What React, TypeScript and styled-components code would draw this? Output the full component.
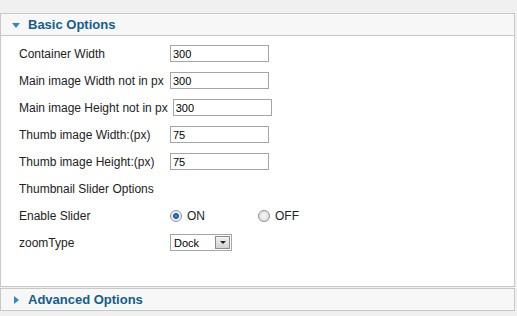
import * as React from 'react';
import styled, { createGlobalStyle } from 'styled-components';

const GlobalStyle = createGlobalStyle`
  html, body {
    margin: 0;
    padding: 0;
    background: #f0f0f0;
  }
  body {
    font-family: "Liberation Sans", Arial, sans-serif;
    font-size: 12px;
    color: #222;
  }
`;

const Page = styled.div`
  width: 515px;
  padding-top: 13px;
  display: flex;
  flex-direction: column;
  gap: 1px;
`;

const Panel = styled.section`
  border: 1px solid #c8c8c8;
  background: #fff;
`;

const PanelHeader = styled.h3<{ $open?: boolean }>`
  margin: 0;
  height: 21px;
  display: flex;
  align-items: center;
  gap: 8px;
  padding-left: 11px;
  background: #f7f7f7;
  border-bottom: ${p => (p.$open ? '1px solid #c8c8c8' : 'none')};
  font-size: 13px;
  font-weight: bold;
  color: #135d8e;
`;

const Arrow = styled.span<{ $open?: boolean }>`
  width: 0;
  height: 0;
  ${p =>
    p.$open
      ? `border-left: 4px solid transparent;
         border-right: 4px solid transparent;
         border-top: 5px solid #2a8ccc;
         margin-top: 1px;`
      : `border-top: 4px solid transparent;
         border-bottom: 4px solid transparent;
         border-left: 5px solid #2a8ccc;
         margin-left: 2px;
         margin-right: 1px;`}
`;

const Body = styled.div`
  height: 250px;
  padding: 4px 0 0 18px;
  box-sizing: border-box;
`;

const Row = styled.div`
  display: flex;
  align-items: center;
  height: 27px;
`;

const Label = styled.label`
  min-width: 146px;
  margin-right: 5px;
  white-space: nowrap;
`;

const TextInput = styled.input`
  width: 99px;
  height: 17px;
  box-sizing: border-box;
  border: 1px solid #a5a5a5;
  padding: 1px 2px;
  font-family: "Liberation Sans", Arial, sans-serif;
  font-size: 11px;
  color: #000;
  outline: none;
`;

const RadioGroup = styled.div`
  display: flex;
  align-items: center;
  width: 88px;
  gap: 5px;
`;

const RadioDot = styled.span<{ $checked?: boolean }>`
  width: 12px;
  height: 12px;
  border-radius: 50%;
  box-sizing: border-box;
  border: 1px solid #8e8f8f;
  background: ${p =>
    p.$checked
      ? 'radial-gradient(circle, #3a8fd6 0, #1c5f9c 2.6px, #e8eef4 3.3px, #f4f4f4 100%)'
      : 'radial-gradient(circle, #f6f6f6 0, #d8d8d8 100%)'};
`;

const Select = styled.div`
  display: flex;
  align-items: center;
  justify-content: space-between;
  width: 62px;
  height: 17px;
  box-sizing: border-box;
  border: 1px solid #a5a5a5;
  padding: 0 1px 0 3px;
  font-size: 11px;
  color: #000;
  background: #fff;
`;

const SelectButton = styled.span`
  width: 15px;
  height: 13px;
  box-sizing: border-box;
  border: 1px solid #8c8c8c;
  background: linear-gradient(#f2f2f2, #d2d2d2);
  display: flex;
  align-items: center;
  justify-content: center;
  &::after {
    content: '';
    border-left: 3px solid transparent;
    border-right: 3px solid transparent;
    border-top: 3px solid #222;
  }
`;

const fields = [
  { label: 'Container Width', value: '300' },
  { label: 'Main image Width not in px', value: '300' },
  { label: 'Main image Height not in px', value: '300' },
  { label: 'Thumb image Width:(px)', value: '75' },
  { label: 'Thumb image Height:(px)', value: '75' },
];

const App: React.FC = () => {
  return (
    <Page>
      <GlobalStyle />
      <Panel>
        <PanelHeader $open>
          <Arrow $open />
          Basic Options
        </PanelHeader>
        <Body>
          {fields.map(f => (
            <Row key={f.label}>
              <Label>{f.label}</Label>
              <TextInput defaultValue={f.value} />
            </Row>
          ))}
          <Row>
            <Label>Thumbnail Slider Options</Label>
          </Row>
          <Row>
            <Label>Enable Slider</Label>
            <RadioGroup>
              <RadioDot $checked />
              ON
            </RadioGroup>
            <RadioGroup>
              <RadioDot />
              OFF
            </RadioGroup>
          </Row>
          <Row>
            <Label>zoomType</Label>
            <Select>
              Dock
              <SelectButton />
            </Select>
          </Row>
        </Body>
      </Panel>
      <Panel>
        <PanelHeader>
          <Arrow />
          Advanced Options
        </PanelHeader>
      </Panel>
    </Page>
  );
};

export default App;
